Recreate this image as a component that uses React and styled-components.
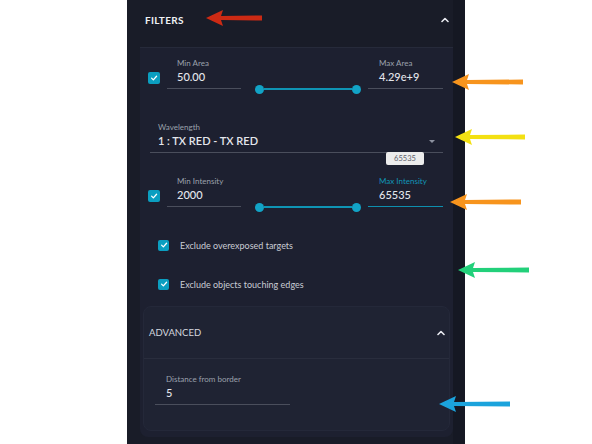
import React from "react";
import styled, { createGlobalStyle } from "styled-components";

const Global = createGlobalStyle`
  html, body { margin: 0; padding: 0; background: #ffffff; }
  body { font-family: Lato, "Noto Sans", sans-serif; }
`;

const Page = styled.div`
  position: relative;
  width: 592px;
  height: 444px;
  overflow: hidden;
  display: flex;
  padding-left: 127px;
  box-sizing: border-box;
  background: #ffffff;
`;

const Panel = styled.div`
  width: 338px;
  height: 444px;
  background: #151823;
  display: flex;
  box-sizing: border-box;
  padding-right: 12px;
`;

const Card = styled.div`
  flex: 1;
  min-width: 0;
  background: #191c28;
  display: flex;
  flex-direction: column;
`;

const Header = styled.div`
  height: 47px;
  display: flex;
  align-items: flex-start;
  justify-content: space-between;
  padding: 14px 1px 0 18px;
  box-sizing: border-box;
`;

const HeaderTitle = styled.span`
  font-size: 10px;
  line-height: 12px;
  font-weight: 700;
  letter-spacing: 0.3px;
  color: #eef0f5;
`;

const ChevronBox = styled.span`
  width: 14px;
  height: 12px;
  display: flex;
  align-items: center;
  justify-content: center;
`;

const Content = styled.div`
  margin-left: 13px;
  background: #1d2030;
  border-top: 1px solid #262a3a;
  border-radius: 0 0 8px 8px;
  padding: 11px 10px 5px 8px;
  display: flex;
  flex-direction: column;
  height: 390px;
  box-sizing: border-box;
`;

const RangeRow = styled.div`
  display: flex;
  align-items: flex-end;
  margin-top: ${(p) => p.$mt || 0}px;
`;

const Check = styled.span`
  width: ${(p) => p.$size || 12}px;
  height: ${(p) => p.$size || 12}px;
  border-radius: 2px;
  background: #0b9ec0;
  display: flex;
  align-items: center;
  justify-content: center;
  flex-shrink: 0;
  margin-bottom: ${(p) => p.$mb || 0}px;
`;

const Field = styled.div`
  position: relative;
  width: ${(p) => p.$w}px;
  margin-left: ${(p) => p.$ml || 0}px;
  display: flex;
  flex-direction: column;
  padding: 0 0 4px ${(p) => p.$pl || 10}px;
  box-sizing: border-box;
  border-bottom: 1px solid ${(p) => (p.$active ? "#0e8fae" : "#4a4e5c")};
`;

const Label = styled.span`
  font-size: 8px;
  line-height: 9px;
  color: ${(p) => (p.$active ? "#1196b8" : "#9ba0ac")};
  margin-bottom: 2px;
  white-space: nowrap;
`;

const Value = styled.span`
  font-size: 11px;
  line-height: 14px;
  font-weight: ${(p) => p.$weight || 500};
  color: #e4e6ec;
  white-space: nowrap;
`;

const SelectLine = styled.div`
  display: flex;
  align-items: center;
  justify-content: space-between;
  padding-right: 8px;
`;

const Caret = styled.span`
  width: 0;
  height: 0;
  border-left: 3px solid transparent;
  border-right: 3px solid transparent;
  border-top: 3px solid #8d92a0;
`;

const Slider = styled.div`
  width: 106px;
  height: 10px;
  margin: 0 7px -5px 14px;
  display: flex;
  align-items: center;
`;

const Thumb = styled.span`
  width: 9px;
  height: 9px;
  border-radius: 50%;
  background: #12a3c6;
  flex-shrink: 0;
`;

const Track = styled.span`
  flex: 1;
  height: 2px;
  background: #0f94b4;
`;

const Tip = styled.span`
  position: absolute;
  left: 18px;
  top: -25px;
  width: 38px;
  height: 13px;
  border-radius: 2px;
  background: #ececec;
  color: #5d616b;
  font-size: 7.5px;
  line-height: 13px;
  text-align: center;
`;

const WaveRow = styled.div`
  margin: 34px 0 0 2px;
`;

const Options = styled.div`
  display: flex;
  flex-direction: column;
  gap: 19px;
  margin: 28px 0 0 10px;
`;

const OptionRow = styled.div`
  display: flex;
  align-items: center;
  height: 20px;
  gap: 11px;
`;

const OptionText = styled.span`
  font-size: 9px;
  color: #c9ccd4;
`;

const Advanced = styled.div`
  margin: 12px -7px 0 -5px;
  background: #1f2333;
  border: 1px solid #242839;
  border-radius: 8px;
  display: flex;
  flex-direction: column;
`;

const AdvHeader = styled.div`
  height: 51px;
  display: flex;
  align-items: center;
  justify-content: space-between;
  padding: 0 1px 0 5px;
  border-bottom: 1px solid #292d3d;
`;

const AdvTitle = styled.span`
  font-size: 9.5px;
  color: #d5d8df;
`;

const AdvBody = styled.div`
  padding: 16px 0 25px 11px;
`;

const ArrowSvg = styled.svg`
  position: absolute;
  left: ${(p) => p.$x}px;
  top: ${(p) => p.$y - 9}px;
`;

function Arrow({ x, y, w, color }) {
  return (
    <ArrowSvg $x={x} $y={y} width={w} height={18} viewBox={`0 0 ${w} 18`}>
      <polygon points={`0,9 17,1 15,7 ${w},6.5 ${w},11.5 15,11 17,17`} fill={color} />
    </ArrowSvg>
  );
}

const CheckMark = () => (
  <svg width="8" height="8" viewBox="0 0 10 10">
    <path d="M2 5.2 L4.2 7.3 L8.2 2.8" fill="none" stroke="#fff" strokeWidth="1.6" strokeLinecap="round" strokeLinejoin="round" />
  </svg>
);

const ChevronUp = () => (
  <svg width="8" height="6" viewBox="0 0 8 6">
    <path d="M1 4.5 L4 1.5 L7 4.5" fill="none" stroke="#e8eaf0" strokeWidth="1.6" strokeLinecap="round" strokeLinejoin="round" />
  </svg>
);

export default function App() {
  return (
    <>
      <Global />
      <Page>
        <Panel>
          <Card>
            <Header>
              <HeaderTitle>FILTERS</HeaderTitle>
              <ChevronBox><ChevronUp /></ChevronBox>
            </Header>
            <Content>
              <RangeRow>
                <Check $mb={5}><CheckMark /></Check>
                <Field $w={74} $ml={7}>
                  <Label>Min Area</Label>
                  <Value>50.00</Value>
                </Field>
                <Slider><Thumb /><Track /><Thumb /></Slider>
                <Field $w={75} $pl={11}>
                  <Label>Max Area</Label>
                  <Value>4.29e+9</Value>
                </Field>
              </RangeRow>

              <WaveRow>
                <Field $w={293} $pl={8}>
                  <Label>Wavelength</Label>
                  <SelectLine>
                    <Value $weight={600}>1 : TX RED - TX RED</Value>
                    <Caret />
                  </SelectLine>
                </Field>
              </WaveRow>

              <RangeRow $mt={24}>
                <Check $mb={5}><CheckMark /></Check>
                <Field $w={74} $ml={7}>
                  <Label>Min Intensity</Label>
                  <Value>2000</Value>
                </Field>
                <Slider><Thumb /><Track /><Thumb /></Slider>
                <Field $w={75} $pl={11} $active>
                  <Tip>65535</Tip>
                  <Label $active>Max Intensity</Label>
                  <Value>65535</Value>
                </Field>
              </RangeRow>

              <Options>
                <OptionRow>
                  <Check $size={11}><CheckMark /></Check>
                  <OptionText>Exclude overexposed targets</OptionText>
                </OptionRow>
                <OptionRow>
                  <Check $size={11}><CheckMark /></Check>
                  <OptionText>Exclude objects touching edges</OptionText>
                </OptionRow>
              </Options>

              <Advanced>
                <AdvHeader>
                  <AdvTitle>ADVANCED</AdvTitle>
                  <ChevronBox><ChevronUp /></ChevronBox>
                </AdvHeader>
                <AdvBody>
                  <Field $w={135} $pl={11}>
                    <Label>Distance from border</Label>
                    <Value>5</Value>
                  </Field>
                </AdvBody>
              </Advanced>
            </Content>
          </Card>
        </Panel>
        <Arrow x={206} y={18} w={56} color="#cc2a14" />
        <Arrow x={452} y={82} w={71} color="#f7941d" />
        <Arrow x={455} y={137} w={70} color="#f3e012" />
        <Arrow x={450} y={202} w={71} color="#f7941d" />
        <Arrow x={458} y={270} w={71} color="#22d07a" />
        <Arrow x={439} y={404} w={71} color="#1ba3dc" />
      </Page>
    </>
  );
}
